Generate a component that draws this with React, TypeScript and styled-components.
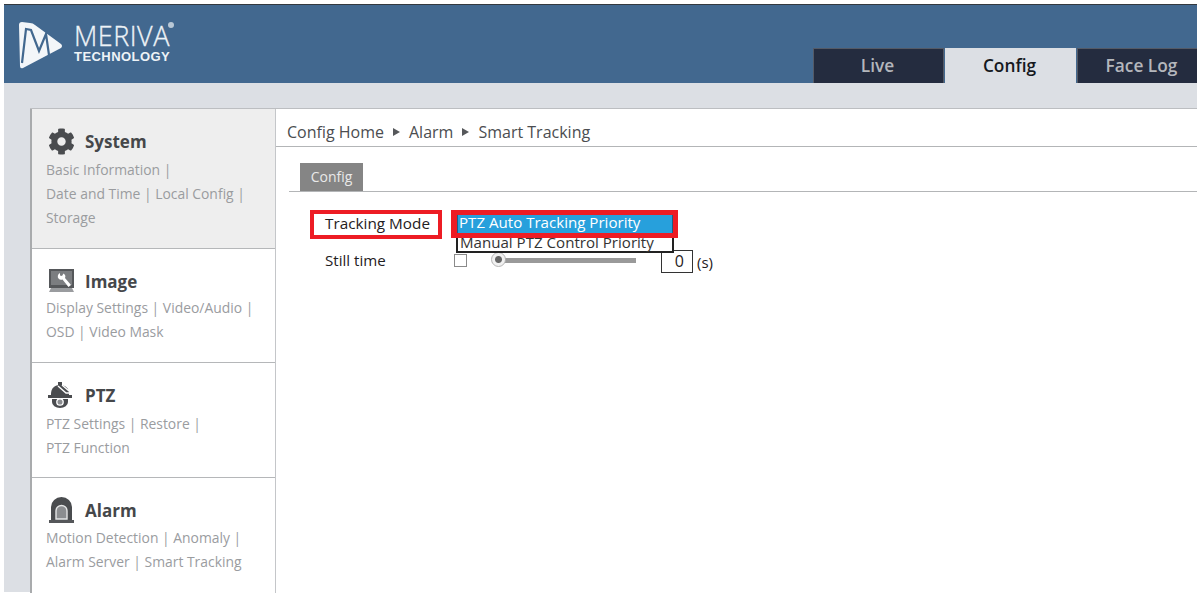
import React from 'react';
import styled, { createGlobalStyle } from 'styled-components';
import { FaCog } from 'react-icons/fa';

const GlobalStyle = createGlobalStyle`
  html, body {
    margin: 0;
    padding: 0;
    background: #fff;
    font-family: "Open Sans", "Noto Sans", sans-serif;
  }
`;

const Page = styled.div`
  width: 1203px;
  height: 598px;
  box-sizing: border-box;
  padding: 4px 6px 6px 4px;
  overflow: hidden;
`;

const Header = styled.header`
  height: 79px;
  box-sizing: border-box;
  background: #42688f;
  border-top: 1px solid #33393f;
  display: flex;
  justify-content: space-between;
  align-items: flex-end;
  overflow: hidden;
`;

const Logo = styled.div`
  align-self: flex-start;
  display: flex;
  align-items: flex-start;
  gap: 11px;
  padding: 16px 0 0 13px;
`;

const LogoText = styled.div`
  position: relative;
  color: #eef3f7;
`;

const LogoName = styled.div`
  font-family: "Open Sans", sans-serif;
  font-size: 27px;
  line-height: 30px;
  font-weight: 300;
  letter-spacing: 0.5px;
  -webkit-text-stroke: 0.3px #eef3f7;
`;

const LogoSub = styled.div`
  font-family: "Liberation Sans", sans-serif;
  font-size: 13px;
  line-height: 11px;
  font-weight: 700;
  letter-spacing: 0.45px;
`;

const Registered = styled.span`
  position: absolute;
  left: 94px;
  top: 1px;
  width: 6px;
  height: 6px;
  border-radius: 50%;
  background: #b9c8d6;
`;

const Tabs = styled.nav`
  display: flex;
  gap: 1px;
  margin-right: -11px;
`;

const Tab = styled.div<{ $active?: boolean }>`
  width: 131px;
  height: 35px;
  box-sizing: border-box;
  display: flex;
  align-items: center;
  justify-content: center;
  padding: 0 2px 2px 0;
  font-size: 17.3px;
  font-weight: 600;
  background: ${(p) => (p.$active ? '#dcdfe4' : '#242c3f')};
  color: ${(p) => (p.$active ? '#15181d' : '#b4b7bc')};
  border: 1px solid ${(p) => (p.$active ? '#dcdfe4' : '#545a66')};
  border-bottom: none;
`;

const Workspace = styled.div`
  height: 509px;
  box-sizing: border-box;
  background: #dcdfe4;
  padding: 25px 0 0 26px;
`;

const Panel = styled.div`
  height: 100%;
  display: flex;
  background: #fff;
  border-top: 1px solid #bcbec1;
`;

const Sidebar = styled.aside`
  width: 246px;
  flex: none;
  box-sizing: border-box;
  border-left: 2px solid #a9abad;
  border-right: 1px solid #c4c6c9;
  display: flex;
  flex-direction: column;
`;

const Section = styled.section<{ $h: number; $active?: boolean }>`
  height: ${(p) => p.$h}px;
  box-sizing: border-box;
  padding: 17px 0 0 14px;
  background: ${(p) => (p.$active ? '#eeeeee' : '#fff')};
  border-bottom: 1px solid #b5b7b9;

  &:last-child {
    border-bottom: none;
  }
`;

const SectionTitle = styled.div<{ $after: number }>`
  display: flex;
  align-items: center;
  height: 30px;
  margin-bottom: ${(p) => p.$after}px;
  color: #45474a;
  font-size: 17px;
  font-weight: 700;
`;

const IconSlot = styled.span`
  width: 39px;
  flex: none;
  display: flex;
  align-items: center;
  padding-left: 2px;
  box-sizing: border-box;
  color: #4a4c4f;
`;

const LinkLine = styled.div`
  font-size: 13.9px;
  line-height: 24px;
  color: #9a9c9f;
  white-space: nowrap;
`;

const Main = styled.main`
  flex: 1;
  min-width: 0;
`;

const Crumbs = styled.div`
  height: 38px;
  box-sizing: border-box;
  border-bottom: 1px solid #b3b5b7;
  display: flex;
  align-items: center;
  gap: 9px;
  padding: 8px 0 0 11px;
  font-size: 16px;
  color: #4b4d50;
`;

const CrumbArrow = styled.span`
  width: 0;
  height: 0;
  border-left: 7px solid #56585b;
  border-top: 4px solid transparent;
  border-bottom: 4px solid transparent;
`;

const SubTabs = styled.div`
  margin: 16px 0 0 13px;
  border-bottom: 1px solid #b3b5b7;
  padding-left: 11px;
  display: flex;
`;

const SubTab = styled.div`
  width: 63px;
  height: 28px;
  padding-bottom: 2px;
  box-sizing: border-box;
  background: #858585;
  color: #e9e9e9;
  font-size: 14px;
  display: flex;
  align-items: center;
  justify-content: center;
`;

const Form = styled.div`
  padding: 18px 0 0 34px;
  color: #1f2022;
  font-size: 15.1px;
`;

const ModeRow = styled.div`
  display: flex;
  align-items: flex-start;
  gap: 9px;
`;

const ModeLabel = styled.div`
  width: 132px;
  height: 29px;
  box-sizing: border-box;
  border: 4px solid #ed1c24;
  padding: 0 0 4px 11px;
  font-size: 15.3px;
  display: flex;
  align-items: center;
`;

const SelectWrap = styled.div`
  position: relative;
  width: 227px;
  height: 28px;
`;

const SelectFrame = styled.div`
  position: relative;
  z-index: 2;
  height: 28px;
  box-sizing: border-box;
  border: 5px solid #ed1c24;
  border-left-width: 6px;
`;

const SelectedOption = styled.div`
  height: 18px;
  background: #27a0dc;
  color: #fff;
  padding-left: 1px;
  line-height: 15px;
  white-space: nowrap;
  border-right: 1px solid #1c5f85;
  border-left: 1px solid #1c5f85;
`;

const DropList = styled.div`
  position: absolute;
  z-index: 1;
  left: 5px;
  top: 22px;
  width: 218px;
  height: 21px;
  box-sizing: border-box;
  border: 2px solid #222;
  border-top: none;
  background: #fff;
  padding-left: 2px;
  line-height: 20px;
  white-space: nowrap;
  color: #333;
`;

const StillRow = styled.div`
  display: flex;
  align-items: center;
  height: 24px;
  margin-top: 9px;
  padding-left: 15px;
  line-height: 24px;
`;

const StillLabel = styled.div`
  width: 129px;
`;

const CheckBox = styled.div`
  width: 13px;
  height: 13px;
  box-sizing: border-box;
  border: 1px solid #8a8a8a;
  margin: 0 25px 0 0;
`;

const Slider = styled.div`
  position: relative;
  width: 144px;
  height: 5px;
  background: #9a9a9a;
`;

const Thumb = styled.div`
  position: absolute;
  left: -1px;
  top: -6px;
  width: 15px;
  height: 15px;
  box-sizing: border-box;
  border-radius: 50%;
  background: radial-gradient(circle, #666 0 3px, #f1f1f1 4px);
  border: 1px solid #b5b5b5;
`;

const ValueBox = styled.div`
  width: 32px;
  height: 23px;
  box-sizing: border-box;
  border: 1px solid #333;
  margin: 3px 4px 0 25px;
  padding-right: 8px;
  text-align: right;
  line-height: 21px;
  font-size: 16px;
`;

const Unit = styled.div`
  font-size: 15px;
  margin-top: 3px;
`;

const LogoMark = () => (
  <svg width="46" height="50" viewBox="0 0 46 50">
    <path
      d="M2 4 Q2 1 5 1 L13 2 Q16 2 18 4 L44 23 Q46 25 44 27 L6 47 Q3 48 3 45 Z"
      fill="#f3f6f9"
    />
    <path
      d="M5 42 L9 8 L14 9 L22 30 L29 13 L32 34"
      fill="none"
      stroke="#42688f"
      strokeWidth="2.2"
    />
  </svg>
);

const ImageIcon = () => (
  <svg width="27" height="24" viewBox="0 0 27 24">
    <path d="M1 0h25v19H1z" fill="#55575a" />
    <path d="M3 2h21v14H3z" fill="#7b7d80" />
    <path d="M3 19h21l2 4H1z" fill="#9a9c9f" />
    <path
      d="M12 4 A3.6 3.6 0 0 0 10.5 9.5 A3.6 3.6 0 0 0 14.5 10.5 L20.5 18 L23 16 L17 9 A3.6 3.6 0 0 0 15.5 4.5 L14 7 L12 6.5 Z"
      fill="#fff"
    />
  </svg>
);

const PtzIcon = () => (
  <svg width="26" height="26" viewBox="0 0 26 26">
    <path d="M10 0h4v4h-4z" fill="#4a4c4f" />
    <path d="M3 12C3 6 7 3 12 3s9 3 9 9v1H3z" fill="#4a4c4f" />
    <path d="M0 13h24v3H0z" fill="#4a4c4f" />
    <path d="M4 17h16v3a8 6 0 0 1-16 0z" fill="#4a4c4f" />
    <path d="M10 4l8 7 4 0M14 3l7 6" fill="none" stroke="#fff" strokeWidth="1.4" />
    <circle cx="12" cy="20" r="3.2" fill="#8b8d90" stroke="#fff" strokeWidth="1.3" />
  </svg>
);

const AlarmIcon = () => (
  <svg width="27" height="27" viewBox="0 0 27 27">
    <path d="M3 23V10a10.5 10 0 0 1 21 0v13z" fill="#4a4c4f" />
    <path d="M8 22V14a5.5 5.5 0 0 1 11 0v8z" fill="#8b8d90" stroke="#e4e5e6" strokeWidth="1.4" />
    <path d="M1 23h25v3H1z" fill="#55575a" />
  </svg>
);

const sections = [
  {
    title: 'System',
    icon: <FaCog size={27} />,
    h: 140,
    active: true,
    after: 2,
    lines: ['Basic Information |', 'Date and Time | Local Config |', 'Storage'],
  },
  {
    title: 'Image',
    icon: <ImageIcon />,
    h: 114,
    after: 0,
    lines: ['Display Settings | Video/Audio |', 'OSD | Video Mask'],
  },
  {
    title: 'PTZ',
    icon: <PtzIcon />,
    h: 115,
    after: 1.5,
    lines: ['PTZ Settings | Restore |', 'PTZ Function'],
  },
  {
    title: 'Alarm',
    icon: <AlarmIcon />,
    h: 115,
    after: 1,
    lines: ['Motion Detection | Anomaly |', 'Alarm Server | Smart Tracking'],
  },
];

const App = () => {
  return (
    <Page>
      <GlobalStyle />
      <Header>
        <Logo>
          <LogoMark />
          <LogoText>
            <LogoName>MERIVA</LogoName>
            <LogoSub>TECHNOLOGY</LogoSub>
            <Registered />
          </LogoText>
        </Logo>
        <Tabs>
          <Tab>Live</Tab>
          <Tab $active>Config</Tab>
          <Tab>Face Log</Tab>
        </Tabs>
      </Header>
      <Workspace>
        <Panel>
          <Sidebar>
            {sections.map((s) => (
              <Section key={s.title} $h={s.h} $active={s.active}>
                <SectionTitle $after={s.after}>
                  <IconSlot>{s.icon}</IconSlot>
                  {s.title}
                </SectionTitle>
                {s.lines.map((line) => (
                  <LinkLine key={line}>{line}</LinkLine>
                ))}
              </Section>
            ))}
          </Sidebar>
          <Main>
            <Crumbs>
              Config Home
              <CrumbArrow />
              Alarm
              <CrumbArrow />
              Smart Tracking
            </Crumbs>
            <SubTabs>
              <SubTab>Config</SubTab>
            </SubTabs>
            <Form>
              <ModeRow>
                <ModeLabel>Tracking Mode</ModeLabel>
                <SelectWrap>
                  <SelectFrame>
                    <SelectedOption>PTZ Auto Tracking Priority</SelectedOption>
                  </SelectFrame>
                  <DropList>Manual PTZ Control Priority</DropList>
                </SelectWrap>
              </ModeRow>
              <StillRow>
                <StillLabel>Still time</StillLabel>
                <CheckBox />
                <Slider>
                  <Thumb />
                </Slider>
                <ValueBox>0</ValueBox>
                <Unit>(s)</Unit>
              </StillRow>
            </Form>
          </Main>
        </Panel>
      </Workspace>
    </Page>
  );
};

export default App;
